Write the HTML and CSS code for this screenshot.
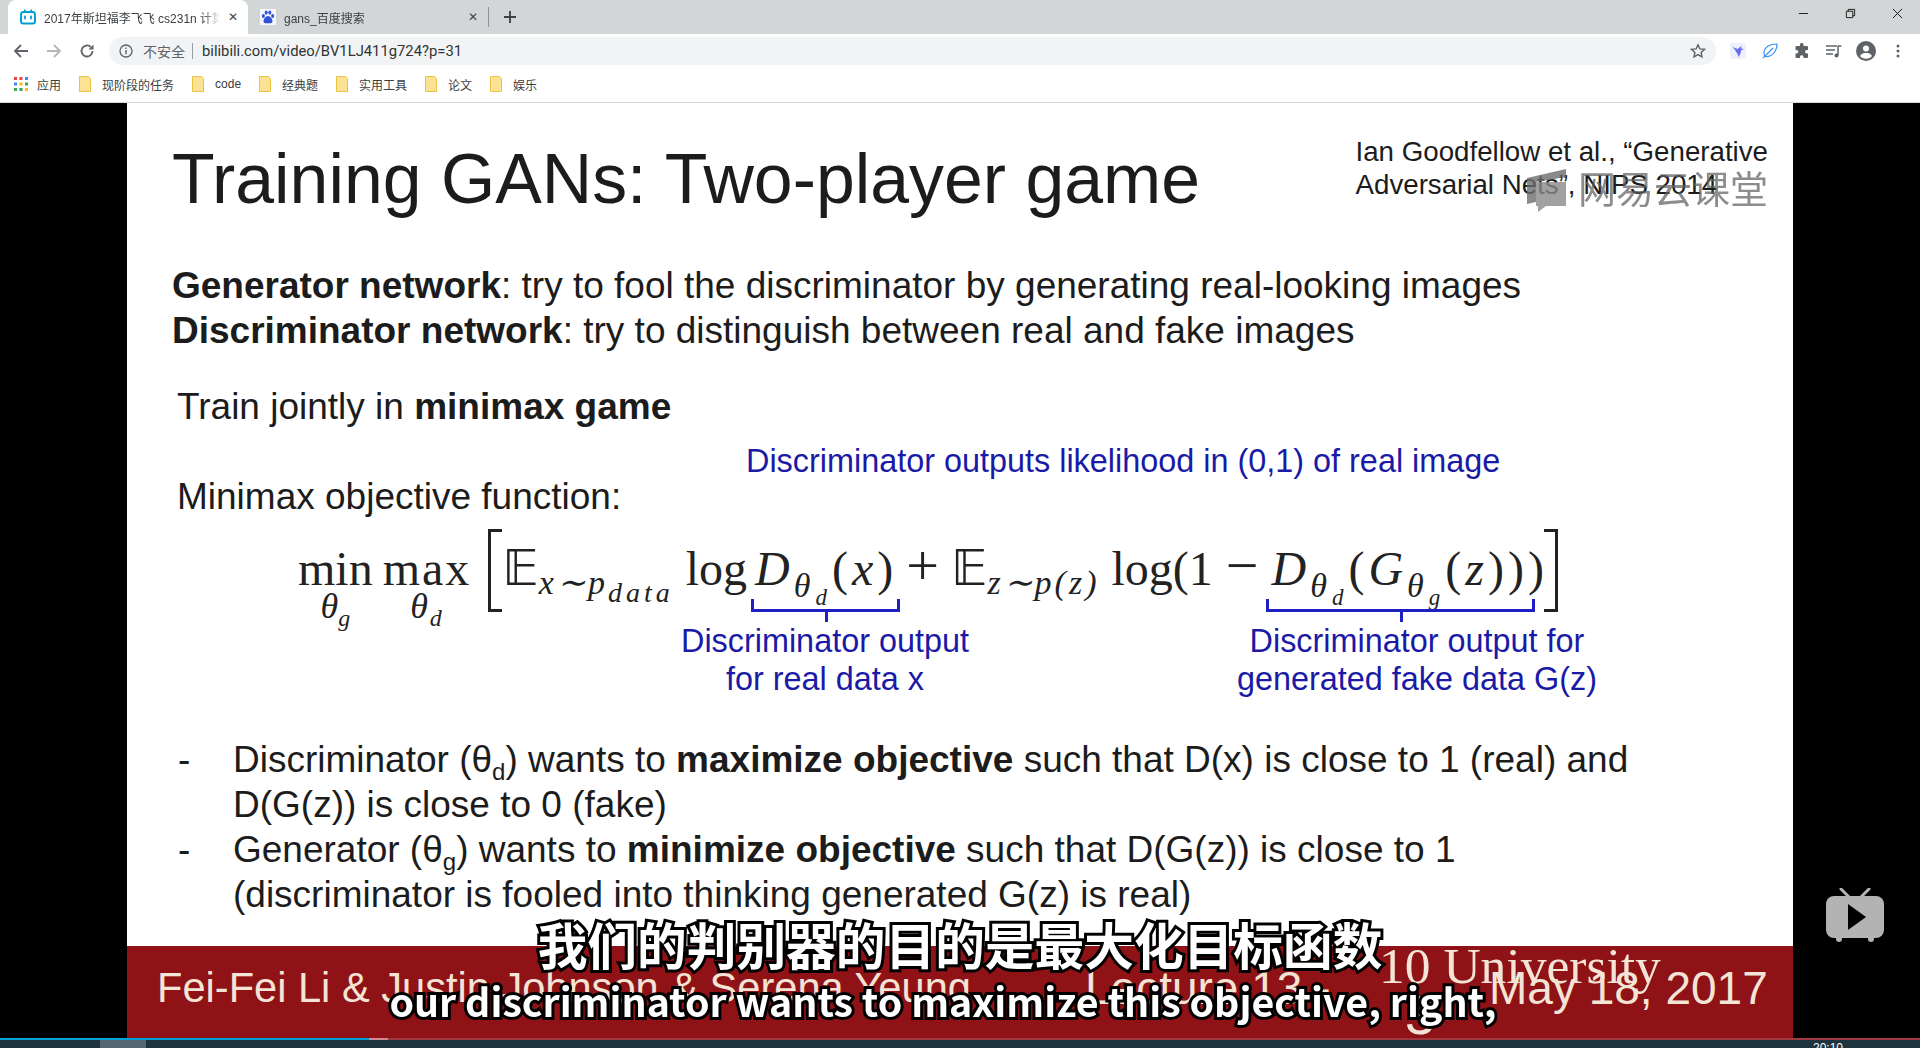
FILE: index.html
```html
<!DOCTYPE html>
<html>
<head>
    <meta charset="UTF-8">
    <title>Training GANs</title>
    <link rel="stylesheet" href="styles.css">
</head>
<body>
    <div class="tabstrip">
        <div class="tab active">
            <svg class="favicon" viewBox="0 0 16 16"><path d="M4.500 1l2 2.200M11.500 1l-2 2.200" stroke="#00a1d6" stroke-width="1.400" stroke-linecap="round"/><rect x="1" y="3" width="14" height="11.500" rx="2.500" fill="none" stroke="#00a1d6" stroke-width="2"/><path d="M5 7.500v2M11 7.500v2" stroke="#00a1d6" stroke-width="1.800" stroke-linecap="round"/></svg>
            <span class="tab-title">2017年斯坦福李飞飞 cs231n 计算机视觉</span>
            <span class="tab-close">✕</span>
        </div>
        <div class="tab">
            <svg class="favicon" viewBox="0 0 16 16"><rect width="16" height="16" fill="#f4f6fb"/><ellipse cx="3.400" cy="7" rx="1.500" ry="2" fill="#2f52d8"/><ellipse cx="6.200" cy="3.600" rx="1.500" ry="2.100" fill="#2f52d8"/><ellipse cx="9.800" cy="3.600" rx="1.500" ry="2.100" fill="#2f52d8"/><ellipse cx="12.600" cy="7" rx="1.500" ry="2" fill="#2f52d8"/><path d="M8 7c-2 0-4.500 3-4.500 5.200C3.500 14 5 14.500 8 14.200c3 .3 4.500-.2 4.500-2C12.500 10 10 7 8 7z" fill="#2f52d8"/></svg>
            <span class="tab-title">gans_百度搜索</span>
            <span class="tab-close">✕</span>
        </div>
        <div class="tab-sep"></div>
        <svg class="new-tab" viewBox="0 0 14 14"><path d="M7 1v12M1 7h12" stroke="#3c4043" stroke-width="1.800"/></svg>
        <div class="window-btns">
            <svg viewBox="0 0 12 12"><path d="M1 6h10" stroke="#111" stroke-width="1"/></svg>
            <svg viewBox="0 0 12 12"><path d="M1.500 3.500h7v7h-7zM3.500 3.500v-2h7v7h-2" fill="none" stroke="#111" stroke-width="1"/></svg>
            <svg viewBox="0 0 12 12"><path d="M1 1l10 10M11 1L1 11" stroke="#111" stroke-width="1"/></svg>
        </div>
    </div>

    <div class="toolbar">
        <svg class="nav-icon" viewBox="0 0 16 16"><path d="M15 8H2M8 2L2 8l6 6" fill="none" stroke="#5f6368" stroke-width="1.800"/></svg>
        <svg class="nav-icon" viewBox="0 0 16 16"><path d="M1 8h13M8 2l6 6-6 6" fill="none" stroke="#b4b7ba" stroke-width="1.800"/></svg>
        <svg class="nav-icon" viewBox="0 0 16 16"><path d="M13.500 8A5.500 5.500 0 1 1 11.800 4" fill="none" stroke="#5f6368" stroke-width="1.800"/><path d="M14.500 1.500v5h-5z" fill="#5f6368"/></svg>
        <div class="omnibox">
            <svg class="info" viewBox="0 0 14 14"><circle cx="7" cy="7" r="6" fill="none" stroke="#5f6368" stroke-width="1.300"/><path d="M7 6v4.200M7 3.600v1.300" stroke="#5f6368" stroke-width="1.400"/></svg>
            <span class="insecure">不安全</span>
            <span class="omni-sep"></span>
            <span class="url">bilibili.com/video/BV1LJ411g724?p=31</span>
            <svg class="star" viewBox="0 0 16 16"><path d="M8 1.800l1.900 4.100 4.500.5-3.300 3 .9 4.500L8 11.600l-4 2.300.9-4.500-3.300-3 4.500-.5z" fill="none" stroke="#5f6368" stroke-width="1.400"/></svg>
        </div>
        <div class="extensions">
            <svg viewBox="0 0 16 16"><rect width="16" height="16" rx="2" fill="#eef0fb"/><path d="M2.500 4l5 2 4-3-.5 2.500 3 .5-3 1.500c0 3-1.500 5-2.500 6.500C8 11 6 8 2.500 4z" fill="#6a6cf0"/></svg>
            <svg viewBox="0 0 16 16"><path d="M15 1C8 1 2 4 2 10c0 1.500.5 3 1.500 3.500C10 14 15 8 15 1zM1 15L11 5" fill="none" stroke="#3b93f2" stroke-width="1.200"/></svg>
            <svg viewBox="0 0 16 16"><path d="M6 1.500a1.800 1.800 0 0 1 3.500 0V3H13a1 1 0 0 1 1 1v3h-1.200a1.800 1.800 0 0 0 0 3.600H14V14a1 1 0 0 1-1 1H9.500v-1.300a1.800 1.800 0 0 0-3.500 0V15H2.500a1 1 0 0 1-1-1v-3.400h1a1.800 1.800 0 0 0 0-3.600h-1V4a1 1 0 0 1 1-1H6z" fill="#5f6368"/></svg>
            <svg viewBox="0 0 16 16"><path d="M0 3h11M0 7h9M0 11h7" stroke="#5f6368" stroke-width="1.300"/><path d="M12 3h3.500M12 3v9" stroke="#5f6368" stroke-width="1.500"/><circle cx="10.500" cy="12.500" r="2" fill="#5f6368"/></svg>
            <svg class="avatar" viewBox="0 0 20 20"><circle cx="10" cy="10" r="10" fill="#5f6368"/><circle cx="10" cy="7.500" r="3" fill="#fff"/><path d="M4 15c1.500-2.500 3.500-3 6-3s4.500.5 6 3c-1.500 1.800-3.500 2.700-6 2.700S5.500 16.800 4 15z" fill="#fff"/></svg>
            <svg viewBox="0 0 16 16"><circle cx="8" cy="3" r="1.500" fill="#5f6368"/><circle cx="8" cy="8" r="1.500" fill="#5f6368"/><circle cx="8" cy="13" r="1.500" fill="#5f6368"/></svg>
        </div>
    </div>

    <div class="bookmarks">
        <div class="bookmark apps">
            <svg viewBox="0 0 14 14"><rect x="0" y="0" width="3" height="3" fill="#e8453c"/><rect x="5.500" y="0" width="3" height="3" fill="#e8453c"/><rect x="11" y="0" width="3" height="3" fill="#4285f4"/><rect x="0" y="5.500" width="3" height="3" fill="#4285f4"/><rect x="5.500" y="5.500" width="3" height="3" fill="#fbbc05"/><rect x="11" y="5.500" width="3" height="3" fill="#34a853"/><rect x="0" y="11" width="3" height="3" fill="#34a853"/><rect x="5.500" y="11" width="3" height="3" fill="#34a853"/><rect x="11" y="11" width="3" height="3" fill="#fbbc05"/></svg>
            <span>应用</span>
        </div>
        <div class="bookmark"><svg viewBox="0 0 12 16"><path class="folder" d="M.5.500h9l2 2v13H.5z"/></svg><span>现阶段的任务</span></div>
        <div class="bookmark"><svg viewBox="0 0 12 16"><path class="folder" d="M.5.500h9l2 2v13H.5z"/></svg><span>code</span></div>
        <div class="bookmark"><svg viewBox="0 0 12 16"><path class="folder" d="M.5.500h9l2 2v13H.5z"/></svg><span>经典题</span></div>
        <div class="bookmark"><svg viewBox="0 0 12 16"><path class="folder" d="M.5.500h9l2 2v13H.5z"/></svg><span>实用工具</span></div>
        <div class="bookmark"><svg viewBox="0 0 12 16"><path class="folder" d="M.5.500h9l2 2v13H.5z"/></svg><span>论文</span></div>
        <div class="bookmark"><svg viewBox="0 0 12 16"><path class="folder" d="M.5.500h9l2 2v13H.5z"/></svg><span>娱乐</span></div>
    </div>

    <div class="player">
        <div class="slide">
            <div class="slide-body">
                <div class="slide-head">
                    <h1>Training GANs: Two-player game</h1>
                    <p class="cite">Ian Goodfellow et al., “Generative<br>Adversarial Nets”, NIPS 2014</p>
                </div>
                <p class="intro"><b>Generator network</b>: try to fool the discriminator by generating real-looking images<br><b>Discriminator network</b>: try to distinguish between real and fake images</p>
                <p class="train">Train jointly in <b>minimax game</b></p>
                <p class="blue-note">Discriminator outputs likelihood in (0,1) of real image</p>
                <p class="train objective">Minimax objective function:</p>
                <div class="formula">
                    <span class="limit lim-min">min<i>θ<sub>g</sub></i></span>
                    <span class="limit lim-max">max<i>θ<sub>d</sub></i></span>
                    <span class="bracket left"></span>
                    <span class="bb">𝔼</span><i class="under">x∼p<sub>data</sub></i>
                    <span class="fn">log</span>
                    <span class="expr"><i>D</i><i class="sub">θ<sub>d</sub></i>(<i>x</i>)</span>
                    <span class="plus sum">+</span>
                    <span class="bb">𝔼</span><i class="under">z∼p(z)</i>
                    <span class="fn">log(1</span>
                    <span class="plus">−</span>
                    <span class="expr tight"><i>D</i><i class="sub">θ<sub>d</sub></i>(<i>G</i><i class="sub">θ<sub>g</sub></i>(<i>z</i>)))</span>
                    <span class="bracket right"></span>
                </div>
                <div class="notes">
                    <div class="note first"><span class="brace short"></span>Discriminator output<br>for real data x</div>
                    <div class="note second"><span class="brace long"></span>Discriminator output for<br>generated fake data G(z)</div>
                </div>
                <ul class="points">
                    <li>Discriminator (θ<sub>d</sub>) wants to <b>maximize objective</b> such that D(x) is close to 1 (real) and<br>D(G(z)) is close to 0 (fake)</li>
                    <li>Generator (θ<sub>g</sub>) wants to <b>minimize objective</b> such that D(G(z)) is close to 1<br>(discriminator is fooled into thinking generated G(z) is real)</li>
                </ul>
            </div>
            <div class="slide-foot">
                <span class="foot-names">Fei-Fei Li &amp; Justin Johnson &amp; Serena Yeung</span>
                <span class="foot-lecture">Lecture 13 -</span>
                <span class="foot-date">May 18, 2017</span>
                <span class="foot-uni">10 University</span>
                <span class="foot-three">3</span>
            </div>
        </div>
        <div class="watermark">
            <svg viewBox="0 0 48 44"><path d="M3 10L42 1v8L12 14v20l-9 2z" fill="#6d6d6d"/><path d="M12 14h30v24H22l-8 6v-6h-2z" fill="#8a8a8a"/></svg>
            <span>网易云课堂</span>
        </div>
        <div class="sub-cn">我们的判别器的目的是最大化目标函数</div>
        <div class="sub-en">our discriminator wants to maximize this objective, right,</div>
        <svg class="tv" viewBox="0 0 60 54"><path d="M16 1l9 9M44 1l-9 9" stroke="#b3b3b3" stroke-width="3" stroke-linecap="round"/><rect x="1" y="8" width="58" height="42" rx="8" fill="#b3b3b3"/><circle cx="14" cy="51" r="3" fill="#b3b3b3"/><circle cx="46" cy="51" r="3" fill="#b3b3b3"/><path d="M23 16l18 13-18 13z" fill="#000"/></svg>
    </div>

    <div class="controls">
        <div class="progress"><span class="played"></span><span class="buffered"></span></div>
        <div class="thumb"></div>
        <span class="time">20:10</span>
    </div>
</body>
</html>
```

FILE: styles.css
```css
html, body {
    margin: 0;
    height: 1048px;
    overflow: hidden;
}

body {
    display: flex;
    flex-direction: column;
    background: #000;
    font-family: "Liberation Sans", "Noto Sans CJK SC", sans-serif;
}

p, h1, ul {
    margin: 0;
    padding: 0;
}

/* browser frame */
.tabstrip {
    height: 34px;
    display: flex;
    background: #d3d6d7;
    padding-left: 8px;
    flex: none;
}

.tab {
    width: 240px;
    box-sizing: border-box;
    padding: 0 10px 0 12px;
    display: flex;
    align-items: center;
    font-size: 12px;
    color: #3c4043;
}

.tab.active {
    background: #fff;
    border-radius: 8px 8px 0 0;
}

.favicon {
    width: 16px;
    height: 16px;
    flex: none;
    margin-right: 8px;
}

.tab-title {
    flex: 1;
    overflow: hidden;
    white-space: nowrap;
    margin-right: 8px;
    -webkit-mask-image: linear-gradient(90deg, #000 90%, transparent);
    mask-image: linear-gradient(90deg, #000 90%, transparent);
}

.tab-close {
    font-size: 12px;
    color: #444;
}

.tab-sep {
    width: 1px;
    height: 20px;
    margin-top: 7px;
    background: #8d9194;
}

.new-tab {
    width: 14px;
    height: 14px;
    margin: 10px 0 0 14px;
}

.window-btns {
    margin-left: auto;
    display: flex;
    gap: 36px;
    padding: 8px 17px 0 0;
}

.window-btns svg {
    width: 11px;
    height: 11px;
}

.toolbar {
    height: 34px;
    background: #fff;
    display: flex;
    align-items: center;
    padding-left: 13px;
    flex: none;
}

.nav-icon {
    width: 16px;
    height: 16px;
    margin-right: 17px;
}

.omnibox {
    width: 1597px;
    height: 28px;
    margin-left: -3px;
    border-radius: 14px;
    background: #f1f3f4;
    display: flex;
    align-items: center;
    padding-left: 10px;
    font-size: 14px;
}

.info {
    width: 14px;
    height: 14px;
    margin-right: 10px;
}

.insecure {
    color: #5f6368;
}

.omni-sep {
    width: 1px;
    height: 16px;
    background: #9aa0a6;
    margin: 0 9px 0 7px;
}

.url {
    color: #303336;
    font-family: Roboto, sans-serif;
    font-size: 14.800px;
}

.star {
    width: 16px;
    height: 16px;
    margin-left: auto;
    margin-right: 10px;
}

.extensions {
    display: flex;
    align-items: center;
    gap: 16px;
    margin-left: 14px;
}

.extensions svg {
    width: 16px;
    height: 16px;
}

.extensions .avatar {
    width: 20px;
    height: 20px;
    margin: 0 -2px;
}

.bookmarks {
    height: 34px;
    background: #fff;
    border-bottom: 1px solid #d6d8da;
    display: flex;
    align-items: center;
    padding-left: 14px;
    gap: 17px;
    flex: none;
    font-size: 12px;
    color: #3c4043;
}

.bookmark {
    display: flex;
    align-items: center;
    gap: 10px;
    margin-top: -2px;
}

.bookmark svg {
    width: 14px;
    height: 16px;
}

.bookmark.apps {
    gap: 9px;
}

.bookmark.apps svg {
    height: 14px;
}

.folder {
    fill: #fde293;
    stroke: #e8c345;
}

/* video */
.player {
    position: relative;
    flex: 1;
    display: flex;
    justify-content: center;
    min-height: 0;
}

.slide {
    width: 1666px;
    background: #fff;
    display: flex;
    flex-direction: column;
    filter: blur(0.6px);
    color: #1c1c1c;
}

.slide-body {
    flex: 1;
    padding-left: 45px;
}

.slide-head {
    display: flex;
    justify-content: space-between;
    padding: 41px 25px 0 0;
}

h1 {
    font-weight: normal;
    font-size: 69.800px;
    line-height: 70px;
}

.cite {
    font-size: 27.700px;
    line-height: 33px;
    margin-top: -9px;
    white-space: nowrap;
}

.intro {
    margin-top: 48.500px;
    font-size: 37px;
    line-height: 45.500px;
}

.train {
    margin: 30px 0 0 5px;
    font-size: 37px;
    line-height: 45px;
}

.train.objective {
    margin-top: -10px;
}

.blue-note {
    margin: 10px 0 0 574px;
    font-size: 32.400px;
    line-height: 45px;
    color: #1a1aa6;
}

.formula {
    display: flex;
    align-items: baseline;
    box-sizing: border-box;
    height: 83px;
    padding-top: 10px;
    margin: 10px 0 0 126px;
    font-family: "Liberation Serif", serif;
    font-size: 48px;
    color: #222;
}

.limit {
    display: flex;
    flex-direction: column;
    align-items: center;
}

.limit i {
    font-size: 36px;
    line-height: 32px;
    margin-top: -6px;
}

.limit sub {
    font-size: 24px;
}

.lim-max {
    margin-left: 10px;
    letter-spacing: 2px;
}

.bracket {
    width: 11px;
    height: 77px;
    border: 3px solid #222;
    flex: none;
    align-self: flex-start;
    margin-top: -10px;
}

.bracket.left {
    border-right: 0;
    margin-left: 17px;
}

.bracket.right {
    border-left: 0;
    margin-left: -4px;
}

.bb {
    font-family: "DejaVu Sans", serif;
    font-size: 50px;
}

.under {
    font-size: 34px;
    letter-spacing: 3px;
    position: relative;
    top: 9px;
    white-space: nowrap;
}

.under sub {
    font-size: 28px;
    line-height: 0;
    letter-spacing: 4px;
}

.fn {
    margin-left: 12px;
}

.expr {
    margin-left: 8px;
    white-space: nowrap;
    letter-spacing: 4px;
}

.expr.tight {
    margin-left: 13px;
}

.sub {
    font-size: 34px;
    letter-spacing: 5px;
    position: relative;
    top: 12px;
}

.sub sub {
    font-size: 23px;
    line-height: 0;
}

.plus {
    font-size: 58px;
    line-height: 48px;
    margin-left: 13px;
}

.plus.sum {
    margin: 0 12px 0 9px;
}

.notes {
    display: flex;
    margin: -13px 0 0 478px;
    color: #1a1aa6;
    font-size: 32.400px;
    line-height: 38px;
    text-align: center;
}

.note {
    display: flex;
    flex-direction: column;
    align-items: center;
}

.note.first {
    width: 350px;
}

.note.second {
    width: 400px;
    margin-left: 217px;
}

.brace {
    display: block;
    position: relative;
    height: 10px;
    margin-bottom: 10px;
    border: 3px solid #1f1fc4;
    border-top: 0;
}

.brace::after {
    content: "";
    position: absolute;
    left: 50%;
    top: 10px;
    width: 3px;
    height: 13px;
    background: #1f1fc4;
}

.brace.short {
    width: 143px;
}

.brace.long {
    width: 263px;
    margin-right: 34px;
}

.points {
    list-style: none;
    margin: 39px 0 0 61px;
    font-size: 37px;
    line-height: 45px;
    white-space: nowrap;
}

.points li {
    position: relative;
}

.points li::before {
    content: "-";
    position: absolute;
    left: -55px;
}

.points sub {
    font-size: 24px;
    line-height: 0;
}

.slide-foot {
    position: relative;
    flex: none;
    height: 92px;
    background: #8e1216;
    color: #f3e4d6;
    font-size: 41.600px;
}

.slide-foot span {
    position: absolute;
    white-space: nowrap;
}

.foot-names {
    left: 30px;
    top: 18px;
}

.foot-lecture {
    left: 958px;
    top: 15px;
    font-size: 46px;
}

.foot-date {
    left: 1362px;
    top: 15px;
    font-size: 46px;
}

.foot-uni {
    left: 1252px;
    top: -10px;
    font-family: "Liberation Serif", serif;
    font-size: 51.500px;
}

.foot-three {
    left: 1278px;
    top: 38px;
    font-size: 54px;
}

/* things laid over the video */
.watermark {
    position: absolute;
    left: 1524px;
    top: 65px;
    display: flex;
    align-items: center;
    gap: 6px;
    font-size: 38px;
    line-height: 44px;
    color: rgba(95, 95, 95, 0.72);
}

.watermark svg {
    width: 48px;
    height: 44px;
    opacity: 0.8;
}

.sub-cn, .sub-en {
    position: absolute;
    left: 0;
    right: 0;
    text-align: center;
    font-family: "Noto Sans CJK SC", sans-serif;
    font-weight: bold;
    color: #fff;
    -webkit-text-stroke: 6px #000;
    paint-order: stroke fill;
    text-shadow: 2px 2px 0 #000;
    white-space: nowrap;
}

.sub-cn {
    top: 808px;
    font-size: 49.700px;
    line-height: 64px;
}

.sub-en {
    top: 867px;
    padding-right: 34px;
    font-size: 39.300px;
    line-height: 60px;
}

.tv {
    position: absolute;
    left: 1825px;
    top: 785px;
    width: 60px;
    height: 54px;
}

.controls {
    position: relative;
    height: 10px;
    flex: none;
    background: #1e3540;
    overflow: hidden;
}

.progress {
    display: flex;
    height: 2px;
    background: #a0393f;
}

.played {
    width: 369px;
    background: #00a1d6;
}

.buffered {
    width: 19px;
    background: #d38a8f;
}

.thumb {
    position: absolute;
    left: 100px;
    top: 2px;
    width: 46px;
    height: 8px;
    background: #546670;
}

.time {
    position: absolute;
    left: 1813px;
    top: 3px;
    font-size: 12px;
    color: #fff;
}
```
